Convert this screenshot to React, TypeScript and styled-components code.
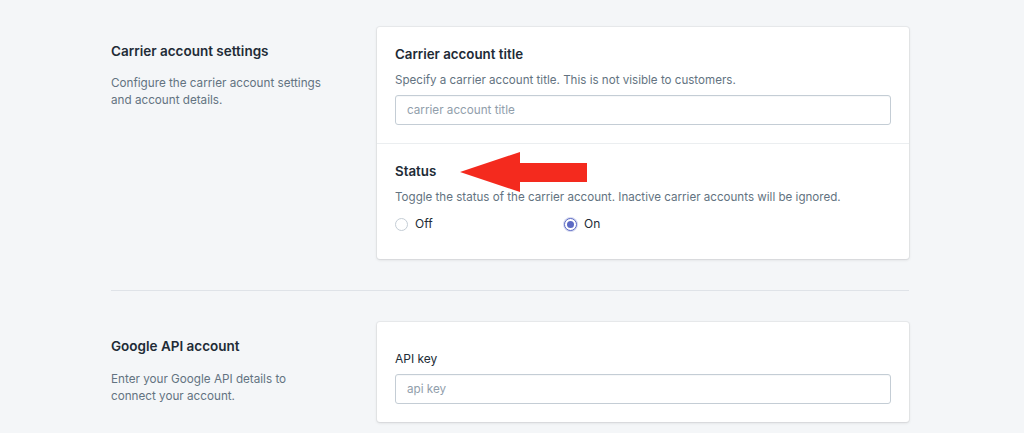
import React, { useState } from 'react';
import styled, { createGlobalStyle } from 'styled-components';

const GlobalStyle = createGlobalStyle`
  html, body {
    margin: 0;
    padding: 0;
    background: #f4f6f8;
    font-family: Inter, "Noto Sans", Arial, sans-serif;
    -webkit-font-smoothing: antialiased;
  }
`;

const Page = styled.div`
  width: 1024px;
  height: 433px;
  overflow: hidden;
  box-sizing: border-box;
  padding: 27px 115px 0 111px;
`;

const Section = styled.div`
  display: flex;
  flex-direction: row;
  align-items: flex-start;
`;

const Aside = styled.div<{ $top: number }>`
  width: 266px;
  flex-shrink: 0;
  padding-top: ${(p) => p.$top}px;
  padding-right: 30px;
  box-sizing: border-box;
`;

const AsideTitle = styled.h2`
  margin: 0;
  font-size: 13.5px;
  line-height: 18px;
  font-weight: 600;
  color: #212b36;
`;

const AsideText = styled.p<{ $gap: number }>`
  margin: ${(p) => p.$gap}px 0 0;
  font-size: 11.7px;
  line-height: 17px;
  color: #637381;
`;

const Card = styled.div`
  flex: 1;
  background: #fff;
  border-radius: 3px;
  box-shadow: 0 0 0 1px rgba(63, 63, 68, 0.05), 0 1px 3px 0 rgba(63, 63, 68, 0.15);
  position: relative;
`;

const CardSection = styled.div<{ $top?: number; $bottom?: number }>`
  padding: ${(p) => p.$top ?? 18}px 18px ${(p) => p.$bottom ?? 18}px;
  & + & {
    border-top: 1px solid #ebeef0;
  }
`;

const FieldTitle = styled.h3`
  margin: 0;
  font-size: 13.3px;
  line-height: 18px;
  font-weight: 600;
  color: #212b36;
`;

const Help = styled.p`
  margin: 9px 0 7px;
  font-size: 11.6px;
  line-height: 16px;
  color: #637381;
`;

const Label = styled.label`
  display: block;
  margin-bottom: 7px;
  font-size: 12px;
  line-height: 16px;
  color: #212b36;
`;

const Input = styled.input`
  display: block;
  width: 100%;
  height: 30px;
  box-sizing: border-box;
  padding: 0 11px;
  border: 1px solid #c4cdd5;
  border-radius: 3px;
  box-shadow: inset 0 1px 0 0 rgba(99, 115, 129, 0.05);
  font-family: inherit;
  font-size: 11.7px;
  color: #212b36;
  outline: none;
  &::placeholder {
    color: #919eab;
  }
`;

const RadioRow = styled.div`
  display: grid;
  grid-template-columns: 169px 1fr;
  margin-top: 11px;
`;

const RadioLabel = styled.label`
  display: flex;
  align-items: center;
  gap: 7px;
  font-size: 12px;
  line-height: 16px;
  color: #212b36;
  cursor: pointer;
`;

const RadioDot = styled.span<{ $on: boolean }>`
  width: 13px;
  height: 13px;
  box-sizing: border-box;
  border-radius: 50%;
  border: 1px solid ${(p) => (p.$on ? '#5c6ac4' : '#c4cdd5')};
  background: #fff;
  display: flex;
  align-items: center;
  justify-content: center;
  box-shadow: ${(p) => (p.$on ? '0 0 0 1px rgba(92,106,196,0.25)' : 'none')};
  &::after {
    content: '';
    width: 7px;
    height: 7px;
    border-radius: 50%;
    background: ${(p) => (p.$on ? '#5c6ac4' : 'transparent')};
  }
`;

const Divider = styled.hr`
  margin: 31px 0 31px;
  border: 0;
  border-top: 1px solid #dfe3e8;
`;

const Arrow = styled.svg`
  position: absolute;
  left: 83px;
  top: 124px;
`;

export default function App() {
  const [status, setStatus] = useState<'off' | 'on'>('on');
  return (
    <>
      <GlobalStyle />
      <Page>
        <Section>
          <Aside $top={15}>
            <AsideTitle>Carrier account settings</AsideTitle>
            <AsideText $gap={15}>
              Configure the carrier account settings
              <br />
              and account details.
            </AsideText>
          </Aside>
          <Card>
            <CardSection>
              <FieldTitle>Carrier account title</FieldTitle>
              <Help>Specify a carrier account title. This is not visible to customers.</Help>
              <Input placeholder="carrier account title" />
            </CardSection>
            <CardSection $top={18} $bottom={27}>
              <FieldTitle>Status</FieldTitle>
              <Help>Toggle the status of the carrier account. Inactive carrier accounts will be ignored.</Help>
              <RadioRow>
                <RadioLabel onClick={() => setStatus('off')}>
                  <RadioDot $on={status === 'off'} />
                  Off
                </RadioLabel>
                <RadioLabel onClick={() => setStatus('on')}>
                  <RadioDot $on={status === 'on'} />
                  On
                </RadioLabel>
              </RadioRow>
            </CardSection>
            <Arrow width="130" height="42" viewBox="0 0 130 42">
              <polygon points="0,21 60,1 60,12 127,12 127,31 60,31 60,41" fill="#f42a1e" />
            </Arrow>
          </Card>
        </Section>
        <Divider />
        <Section>
          <Aside $top={15}>
            <AsideTitle>Google API account</AsideTitle>
            <AsideText $gap={16}>
              Enter your Google API details to
              <br />
              connect your account.
            </AsideText>
          </Aside>
          <Card>
            <CardSection $top={29}>
              <Label>API key</Label>
              <Input placeholder="api key" />
            </CardSection>
          </Card>
        </Section>
      </Page>
    </>
  );
}
